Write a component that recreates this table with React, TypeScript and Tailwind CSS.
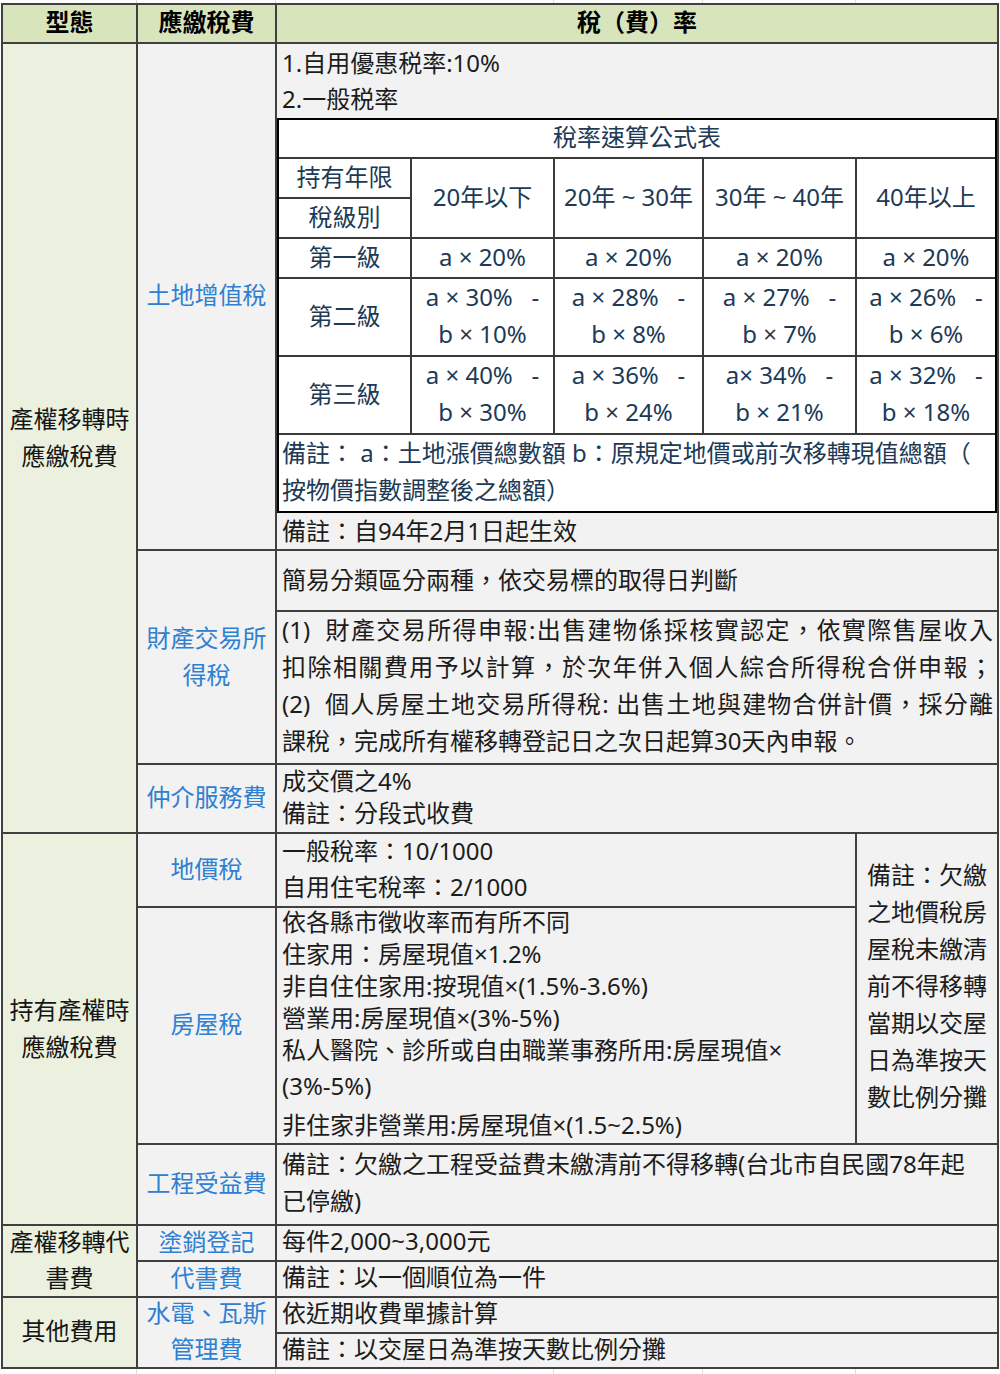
import type { ReactNode } from 'react';

// faint spreadsheet gridlines above and below the table
function SheetLines({ tall }: { tall?: boolean }) {
    return (
        <div className={`flex ${tall ? 'h-[5px]' : 'h-[3px]'}`}>
            <div className="w-[137px] border-r border-[#dcdcdc]" />
            <div className="w-[139px] border-r border-[#dcdcdc]" />
            <div className="w-[278px] border-r border-[#dcdcdc]" />
            <div className="w-[149px] border-r border-[#dcdcdc]" />
            <div className="w-[153px] border-r border-[#dcdcdc]" />
        </div>
    );
}

function Label({ className, children }: { className: string; children: ReactNode }) {
    return (
        <div className={`col-start-2 flex flex-col items-center justify-center bg-[#f2f2f2] pb-[3px] text-[#2f80d1] ${className}`}>
            {children}
        </div>
    );
}

function Group({ className, children }: { className: string; children: ReactNode }) {
    return (
        <div className={`col-start-1 flex flex-col items-center justify-center bg-[#ebf1de] pb-[3px] text-[#161616] ${className}`}>
            {children}
        </div>
    );
}

function Cell({ children, className = '' }: { children: ReactNode; className?: string }) {
    return <div className={`flex items-center justify-center bg-white pb-[3px] ${className}`}>{children}</div>;
}

function Rate({ a, b }: { a: string; b: string }) {
    return (
        <div className="flex flex-col items-center justify-center bg-white pb-[4px] leading-[37px] whitespace-pre">
            <div>{a}</div>
            <div>{b}</div>
        </div>
    );
}

function RateTable() {
    return (
        <div className="grid h-[395px] grid-cols-[131px_141px_147px_151px_138px] grid-rows-[37px_38px_38px_38px_76px_76px_76px] gap-[2px] border-2 border-black bg-[#3a3a3a] text-[#203a56]">
            <Cell className="col-span-5">稅率速算公式表</Cell>

            <Cell className="col-start-1 row-start-2">持有年限</Cell>
            <Cell className="col-start-1 row-start-3">稅級別</Cell>
            <Cell className="col-start-2 row-start-2 row-span-2">20年以下</Cell>
            <Cell className="col-start-3 row-start-2 row-span-2">20年 ~ 30年</Cell>
            <Cell className="col-start-4 row-start-2 row-span-2">30年 ~ 40年</Cell>
            <Cell className="col-start-5 row-start-2 row-span-2">40年以上</Cell>

            <Cell>第一級</Cell>
            <Cell>a × 20%</Cell>
            <Cell>a × 20%</Cell>
            <Cell>a × 20%</Cell>
            <Cell>a × 20%</Cell>

            <Cell>第二級</Cell>
            <Rate a="a × 30%   -" b="b × 10%" />
            <Rate a="a × 28%   -" b="b × 8%" />
            <Rate a="a × 27%   -" b="b × 7%" />
            <Rate a="a × 26%   -" b="b × 6%" />

            <Cell>第三級</Cell>
            <Rate a="a × 40%   -" b="b × 30%" />
            <Rate a="a × 36%   -" b="b × 24%" />
            <Rate a="a× 34%   -" b="b × 21%" />
            <Rate a="a × 32%   -" b="b × 18%" />

            <div className="col-span-5 flex flex-col justify-center bg-white px-[3px] pb-[4px] leading-[37px]">
                <div>備註： a：土地漲價總數額 b：原規定地價或前次移轉現值總額（</div>
                <div>按物價指數調整後之總額）</div>
            </div>
        </div>
    );
}

export default function App() {
    return (
        <div className="min-h-[1374px] w-[1000px] bg-white font-['Noto_Sans','Noto_Sans_CJK_TC','Noto_Sans_CJK_JP',sans-serif] text-[24px] text-[#1c1c1c]">
            <SheetLines />
            <div className="ml-[1px] grid w-[998px] grid-cols-[133px_137px_578px_140px] grid-rows-[37px_505px_59px_151px_67px_72px_235px_79px_34px_34px_34px_33px] gap-[2px] bg-[#404040] p-[2px]">
                {/* 表頭 */}
                <div className="col-start-1 row-start-1 flex items-center justify-center bg-[#d8e4bc] pb-[4px] font-bold text-black">型態</div>
                <div className="col-start-2 row-start-1 flex items-center justify-center bg-[#d8e4bc] pb-[4px] font-bold text-black">應繳稅費</div>
                <div className="col-start-3 col-span-2 row-start-1 flex items-center justify-center bg-[#d8e4bc] pb-[4px] font-bold text-black">稅（費）率</div>

                {/* 第一欄 */}
                <Group className="row-start-2 row-span-4 leading-[37px]">
                    <div>產權移轉時</div>
                    <div>應繳稅費</div>
                </Group>
                <Group className="row-start-6 row-span-3 leading-[37px]">
                    <div>持有產權時</div>
                    <div>應繳稅費</div>
                </Group>
                <Group className="row-start-9 row-span-2 leading-[36px]">
                    <div>產權移轉代</div>
                    <div>書費</div>
                </Group>
                <Group className="row-start-11 row-span-2">
                    <div>其他費用</div>
                </Group>

                {/* 第二欄 */}
                <Label className="row-start-2">土地增值稅</Label>
                <Label className="row-start-3 row-span-2 leading-[37px]">
                    <div>財產交易所</div>
                    <div>得稅</div>
                </Label>
                <Label className="row-start-5">仲介服務費</Label>
                <Label className="row-start-6">地價稅</Label>
                <Label className="row-start-7">房屋稅</Label>
                <Label className="row-start-8">工程受益費</Label>
                <Label className="row-start-9">塗銷登記</Label>
                <Label className="row-start-10">代書費</Label>
                <Label className="row-start-11 row-span-2 leading-[36px]">
                    <div>水電、瓦斯</div>
                    <div>管理費</div>
                </Label>

                {/* 土地增值稅 */}
                <div className="col-start-3 col-span-2 row-start-2 flex flex-col bg-[#f2f2f2]">
                    <div className="flex h-[74px] flex-col justify-center pl-[5px] leading-[36px]">
                        <div>1.自用優惠税率:10%</div>
                        <div>2.一般税率</div>
                    </div>
                    <RateTable />
                    <div className="flex h-[36px] items-center pl-[5px]">備註：自94年2月1日起生效</div>
                </div>

                {/* 財產交易所得稅 */}
                <div className="col-start-3 col-span-2 row-start-3 flex items-center bg-[#f2f2f2] pb-[2px] pl-[5px]">
                    簡易分類區分兩種，依交易標的取得日判斷
                </div>
                <div className="col-start-3 col-span-2 row-start-4 flex flex-col justify-center bg-[#f2f2f2] pb-[6px] pl-[5px] pr-[4px] leading-[37px] whitespace-pre">
                    <div className="text-justify [text-align-last:justify]">(1)  財產交易所得申報:出售建物係採核實認定，依實際售屋收入</div>
                    <div className="text-justify [text-align-last:justify]">扣除相關費用予以計算，於次年併入個人綜合所得稅合併申報；</div>
                    <div className="text-justify [text-align-last:justify]">(2)  個人房屋土地交易所得稅: 出售土地與建物合併計價，採分離</div>
                    <div>課稅，完成所有權移轉登記日之次日起算30天內申報。</div>
                </div>

                {/* 仲介服務費 */}
                <div className="col-start-3 col-span-2 row-start-5 flex flex-col justify-center bg-[#f2f2f2] pb-[3px] pl-[5px] leading-[32px]">
                    <div>成交價之4%</div>
                    <div>備註：分段式收費</div>
                </div>

                {/* 地價稅 / 房屋稅 */}
                <div className="col-start-3 row-start-6 flex flex-col justify-center bg-[#f2f2f2] pb-[2px] pl-[5px] leading-[36px]">
                    <div>一般稅率：10/1000</div>
                    <div>自用住宅稅率：2/1000</div>
                </div>
                <div className="col-start-3 row-start-7 flex flex-col justify-center bg-[#f2f2f2] pb-[2px] pl-[5px]">
                    <div className="leading-[32px]">依各縣市徵收率而有所不同</div>
                    <div className="leading-[32px]">住家用：房屋現值×1.2%</div>
                    <div className="leading-[32px]">非自住住家用:按現值×(1.5%-3.6%)</div>
                    <div className="leading-[32px]">營業用:房屋現值×(3%-5%)</div>
                    <div className="leading-[32px]">私人醫院、診所或自由職業事務所用:房屋現值×</div>
                    <div className="leading-[40px]">(3%-5%)</div>
                    <div className="leading-[37px]">非住家非營業用:房屋現值×(1.5~2.5%)</div>
                </div>
                <div className="col-start-4 row-start-6 row-span-2 flex flex-col items-center justify-center bg-[#f2f2f2] pb-[6px] leading-[37px]">
                    <div>備註：欠繳</div>
                    <div>之地價稅房</div>
                    <div>屋稅未繳清</div>
                    <div>前不得移轉</div>
                    <div>當期以交屋</div>
                    <div>日為準按天</div>
                    <div>數比例分攤</div>
                </div>

                {/* 工程受益費 */}
                <div className="col-start-3 col-span-2 row-start-8 flex flex-col justify-center bg-[#f2f2f2] pb-[6px] pl-[5px] leading-[37px]">
                    <div>備註：欠繳之工程受益費未繳清前不得移轉(台北市自民國78年起</div>
                    <div>已停繳)</div>
                </div>

                {/* 代書費 / 其他 */}
                <div className="col-start-3 col-span-2 row-start-9 flex items-center bg-[#f2f2f2] pb-[4px] pl-[5px]">每件2,000~3,000元</div>
                <div className="col-start-3 col-span-2 row-start-10 flex items-center bg-[#f2f2f2] pb-[4px] pl-[5px]">備註：以一個順位為一件</div>
                <div className="col-start-3 col-span-2 row-start-11 flex items-center bg-[#f2f2f2] pb-[4px] pl-[5px]">依近期收費單據計算</div>
                <div className="col-start-3 col-span-2 row-start-12 flex items-center bg-[#f2f2f2] pb-[4px] pl-[5px]">備註：以交屋日為準按天數比例分攤</div>
            </div>
            <SheetLines tall />
        </div>
    );
}
